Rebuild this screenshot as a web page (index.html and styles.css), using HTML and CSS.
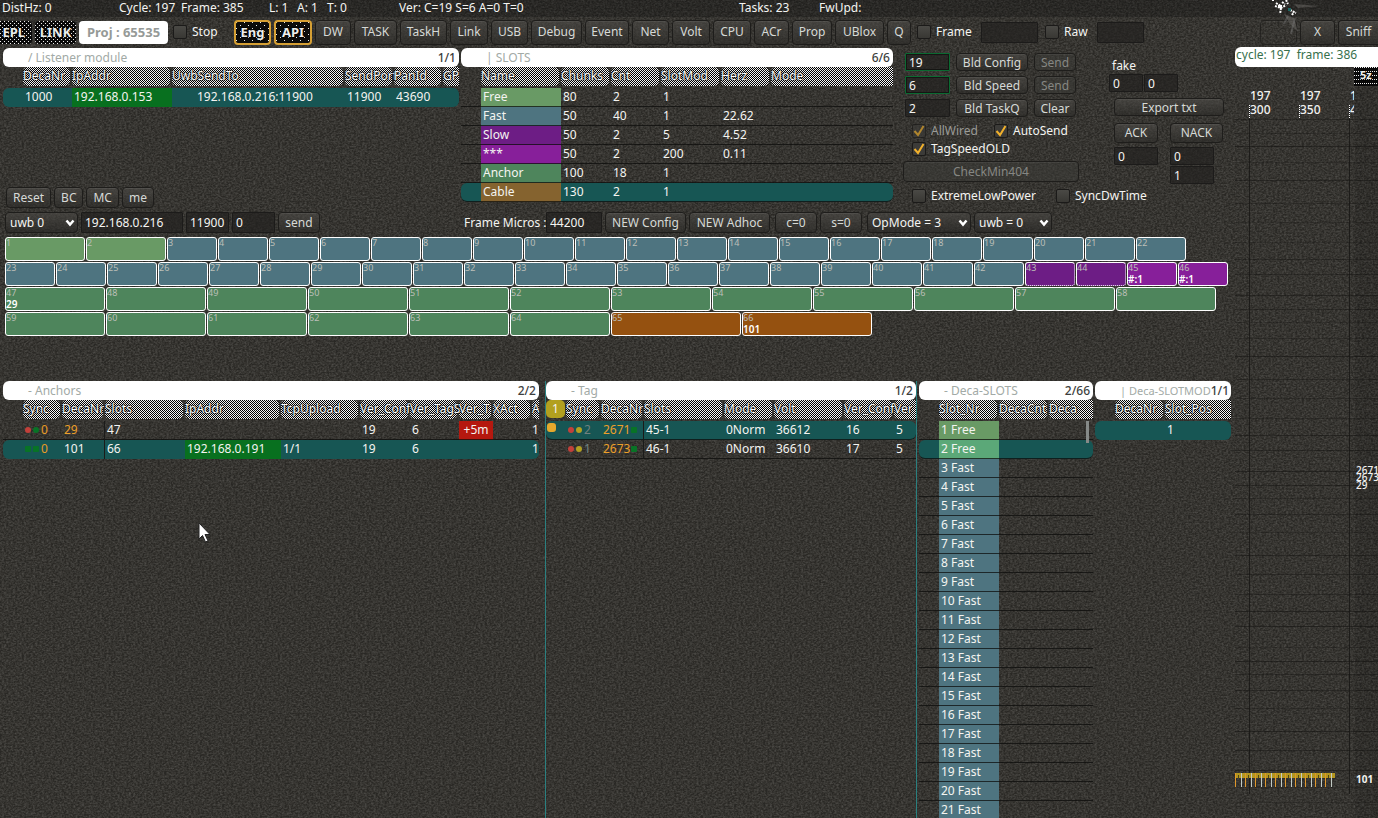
FILE: index.html
```
<!DOCTYPE html>
<html lang="en">
<head>
<meta charset="utf-8">
<title>Listener console</title>
<link rel="stylesheet" href="styles.css">
</head>
<body>
<header class="status">
  <span>DistHz: 0</span><span>Cycle: 197</span><span>Frame: 385</span><span>L: 1</span><span>A: 1</span><span>T: 0</span><span>Ver: C=19 S=6 A=0 T=0</span><span>Tasks: 23</span><span>FwUpd:</span>
  <svg class="emblem" width="56" height="46" viewBox="0 0 56 46" aria-hidden="true">
    <path d="M16 14 L26 18 L30 32 L22 24 Z M26 4 L52 6 L30 8 Z" fill="#6b6a66" opacity=".5"/>
    <path d="M4 0h3M8 3l5 3M7 6l6 2 5-3M13 8l-1 6M14 2l3 2M18 0l2 4M22 10l6 3M24 15l2-3" stroke="#fff" stroke-width="2" stroke-dasharray="2 1" fill="none"/>
    <path d="M10 5h4v3h-4z" fill="#fff"/><path d="M20 8h3v3h-3z" fill="#1e6663"/>
    <path d="M20 16l-4 8M27 18l-4 16" stroke="#777" opacity=".4" stroke-width="2"/>
  </svg>
</header>

<nav class="toolbar">
  <button class="led repl">EPL</button>
  <button class="led">LINK</button>
  <button class="proj">Proj : 65535</button>
  <label class="check"><input type="checkbox">Stop</label>
  <button class="led on">Eng</button>
  <button class="led on">API</button>
  <button class="btn">DW</button>
  <button class="btn">TASK</button>
  <button class="btn">TaskH</button>
  <button class="btn">Link</button>
  <button class="btn">USB</button>
  <button class="btn">Debug</button>
  <button class="btn">Event</button>
  <button class="btn">Net</button>
  <button class="btn">Volt</button>
  <button class="btn">CPU</button>
  <button class="btn">ACr</button>
  <button class="btn">Prop</button>
  <button class="btn">UBlox</button>
  <button class="btn short">Q</button>
  <label class="check"><input type="checkbox">Frame</label>
  <input class="field filter" type="text" aria-label="Frame filter">
  <label class="check"><input type="checkbox">Raw</label>
  <input class="field" type="text" aria-label="Raw filter">
  <span></span>
  <button class="btn ghost" aria-label="Blank"></button>
  <button class="btn">X</button>
  <button class="btn sniff">Sniff</button>
</nav>

<div class="page">
<main>
  <div class="upper">
    <section class="stack">
      <div class="panel">
        <h2 class="title"><span>/ Listener module</span><b>1/1</b></h2>
        <table>
          <colgroup><col style="width:20px"><col style="width:49px"><col style="width:100px"><col style="width:173px"><col style="width:49px"><col style="width:49px"><col style="width:16px"></colgroup>
          <thead><tr><td></td><th><div>DecaNr</div></th><th><div>IpAddr</div></th><th><div>UwbSendTo</div></th><th><div>SendPort</div></th><th><div>PanId</div></th><th><div>GP</div></th></tr></thead>
          <tbody><tr class="sel"><td></td><td>1000</td><td class="ip">192.168.0.153</td><td class="mid">192.168.0.216:11900</td><td>11900</td><td>43690</td><td></td></tr></tbody>
        </table>
      </div>
      <div class="actions"><button class="btn">Reset</button><button class="btn">BC</button><button class="btn">MC</button><button class="btn">me</button></div>
    </section>

    <section class="panel">
      <h2 class="title"><span>| SLOTS</span><b>6/6</b></h2>
      <table class="ruled">
        <colgroup><col style="width:20px"><col style="width:80px"><col style="width:50px"><col style="width:50px"><col style="width:60px"><col style="width:50px"><col style="width:122px"></colgroup>
        <thead><tr><td></td><th><div>Name</div></th><th><div>Chunks</div></th><th><div>Cnt</div></th><th><div>SlotMod</div></th><th><div>Herz</div></th><th><div>Mode</div></th></tr></thead>
        <tbody>
          <tr><td></td><td class="k-free">Free</td><td>80</td><td>2</td><td>1</td><td></td><td></td></tr>
          <tr><td></td><td class="k-fast">Fast</td><td>50</td><td>40</td><td>1</td><td>22.62</td><td></td></tr>
          <tr><td></td><td class="k-slow">Slow</td><td>50</td><td>2</td><td>5</td><td>4.52</td><td></td></tr>
          <tr><td></td><td class="k-star">***</td><td>50</td><td>2</td><td>200</td><td>0.11</td><td></td></tr>
          <tr><td></td><td class="k-anchor">Anchor</td><td>100</td><td>18</td><td>1</td><td></td><td></td></tr>
          <tr class="sel"><td></td><td class="k-cable">Cable</td><td>130</td><td>2</td><td>1</td><td></td><td></td></tr>
        </tbody>
      </table>
    </section>

    <section class="controls">
      <div class="build">
        <div class="grid3">
          <input class="field green" type="text" value="19" aria-label="Config version"><button class="btn">Bld Config</button><button class="btn dim">Send</button>
          <input class="field green" type="text" value="6" aria-label="Speed version"><button class="btn">Bld Speed</button><button class="btn dim">Send</button>
          <input class="field" type="text" value="2" aria-label="Task count"><button class="btn">Bld TaskQ</button><button class="btn">Clear</button>
        </div>
        <div class="ticks">
          <label class="check dim"><input type="checkbox" checked>AllWired</label>
          <label class="check"><input type="checkbox" checked>AutoSend</label>
          <label class="check"><input type="checkbox" checked>TagSpeedOLD</label>
        </div>
        <button class="btn dim wide">CheckMin404</button>
      </div>
      <div class="fake">
        <label for="fake1">fake</label>
        <div class="pair"><input id="fake1" class="field" type="text" value="0"><input class="field" type="text" value="0" aria-label="fake 2"></div>
        <button class="btn export">Export txt</button>
        <div class="acks">
          <button class="btn">ACK</button><button class="btn">NACK</button>
          <input class="field" type="text" value="0" aria-label="ACK count"><div class="nacks"><input class="field" type="text" value="0" aria-label="NACK count"><input class="field" type="text" value="1" aria-label="NACK limit"></div>
        </div>
      </div>
      <div class="power">
        <label class="check"><input type="checkbox">ExtremeLowPower</label>
        <label class="check"><input type="checkbox">SyncDwTime</label>
      </div>
    </section>
  </div>

  <div class="command">
    <div class="sender">
      <select class="w-uwb" aria-label="Module"><option>uwb 0</option></select>
      <input class="field w-addr" type="text" value="192.168.0.216" aria-label="Address">
      <input class="field w-port" type="text" value="11900" aria-label="Port">
      <input class="field w-port" type="text" value="0" aria-label="Command">
      <button class="btn w-small">send</button>
    </div>
    <div class="framing">
      <label for="micros">Frame Micros :</label>
      <input id="micros" class="field w-micros" type="text" value="44200">
      <button class="btn w-new">NEW Config</button>
      <button class="btn w-new">NEW Adhoc</button>
      <button class="btn w-small gap">c=0</button>
      <button class="btn w-small">s=0</button>
      <select class="w-op gap" aria-label="Operation mode"><option>OpMode = 3</option></select>
      <select class="w-uwb2" aria-label="UWB"><option>uwb = 0</option></select>
    </div>
  </div>

  <div class="timeline" id="timeline"></div>

  <div class="lower">
    <section class="panel anchors">
      <h2 class="title"><span>- Anchors</span><b>2/2</b></h2>
      <table>
        <colgroup><col style="width:20px"><col style="width:39px"><col style="width:43px"><col style="width:80px"><col style="width:96px"><col style="width:79px"><col style="width:50px"><col style="width:49px"><col style="width:34px"><col style="width:39px"><col style="width:7px"></colgroup>
        <thead><tr><td></td><th><div>Sync</div></th><th><div>DecaNr</div></th><th><div>Slots</div></th><th><div>IpAddr</div></th><th><div>TcpUpload</div></th><th><div>Ver_Conf</div></th><th><div>Ver_TagS</div></th><th><div>Ver_T</div></th><th><div>XAct</div></th><th><div>A</div></th></tr></thead>
        <tbody>
          <tr class="line"><td></td><td class="sync"><i class="dot red"></i><i class="dot grn"></i><em>0</em></td><td class="amber edge">29</td><td>47</td><td></td><td></td><td>19</td><td>6</td><td class="alarm">+5m</td><td></td><td class="last">1</td></tr>
          <tr class="sel"><td></td><td class="sync"><i class="dot grn sq"></i><i class="dot grn sq"></i><em>0</em></td><td class="edge">101</td><td>66</td><td class="ip">192.168.0.191</td><td>1/1</td><td>19</td><td>6</td><td></td><td></td><td class="last">1</td></tr>
        </tbody>
      </table>
    </section>

    <section class="panel tags">
      <h2 class="title"><span>- Tag</span><b>1/2</b></h2>
      <table class="ruled">
        <colgroup><col style="width:20px"><col style="width:35px"><col style="width:43px"><col style="width:80px"><col style="width:50px"><col style="width:70px"><col style="width:50px"><col style="width:22px"></colgroup>
        <thead><tr><td><span class="badge">1</span></td><th><div>Sync</div></th><th><div>DecaNr</div></th><th><div>Slots</div></th><th><div>Mode</div></th><th><div>Volt</div></th><th><div>Ver_Conf</div></th><th><div>Ver</div></th></tr></thead>
        <tbody>
          <tr class="sel"><td class="mark"><i></i></td><td class="sync"><i class="dot red"></i><i class="dot yel"></i><em class="off">2</em></td><td class="amber edge">2671<i class="dot grn sq"></i></td><td>45-1</td><td>0Norm</td><td>36612</td><td>16</td><td>5</td></tr>
          <tr><td></td><td class="sync"><i class="dot red"></i><i class="dot yel"></i><em class="off">1</em></td><td class="amber edge">2673<i class="dot grn sq"></i></td><td>46-1</td><td>0Norm</td><td>36610</td><td>17</td><td>5</td></tr>
        </tbody>
      </table>
    </section>

    <section class="panel deca">
      <h2 class="title"><span>- Deca-SLOTS</span><b>2/66</b></h2>
      <table class="ruled">
        <colgroup><col style="width:20px"><col style="width:60px"><col style="width:50px"><col style="width:44px"></colgroup>
        <thead><tr><td></td><th><div>Slot_Nr</div></th><th><div>DecaCnt</div></th><th><div>Deca</div></th></tr></thead>
        <tbody id="slotRows"></tbody>
      </table>
      <span class="thumb"></span>
    </section>

    <section class="panel">
      <h2 class="title small"><span>| Deca-SLOTMOD</span><b>1/1</b></h2>
      <table>
        <colgroup><col style="width:20px"><col style="width:50px"><col style="width:66px"></colgroup>
        <thead><tr><td></td><th><div>DecaNr</div></th><th><div>Slot_Pos</div></th></tr></thead>
        <tbody><tr class="sel"><td></td><td></td><td>1</td></tr></tbody>
      </table>
    </section>
  </div>
</main>

<aside class="plot">
  <h2 class="plot-title">cycle: 197&nbsp; frame: 386</h2>
  <span class="scale">5z</span>
  <svg class="canvas" id="plot" aria-label="Frame plot"></svg>
</aside>
</div>

<svg class="pointer" width="14" height="22" viewBox="0 0 14 22" aria-hidden="true"><path d="M1 1v16l3.500-3.500 3 6.500 2.500-1.200-3-6.300h5z" fill="#fff" stroke="#222" stroke-width="1"/></svg>
<script src="app.js"></script>
</body>
</html>
```
FILE: styles.css
```
* { box-sizing: border-box; }
:root {
  --teal: #175654;
  --edge: #1e1d1b;
  --text: #f4f4f1;
  --check: repeating-conic-gradient(#000 0 25%, #f4f4f4 0 50%);
  --speck: conic-gradient(at 1px 1px, transparent 75%, #eee 0);
  --noise: url("data:image/svg+xml,%3Csvg xmlns='http://www.w3.org/2000/svg' width='256' height='256'%3E%3Cfilter id='n' x='0' y='0' width='100%25' height='100%25' color-interpolation-filters='sRGB'%3E%3CfeTurbulence type='fractalNoise' baseFrequency='.45 .6' numOctaves='3' seed='4' stitchTiles='stitch'/%3E%3CfeColorMatrix values='1 0 0 0 -.28 1 0 0 0 -.29 1 0 0 0 -.305 0 0 0 0 .24'/%3E%3C/filter%3E%3Crect width='256' height='256' filter='url(%23n)'/%3E%3C/svg%3E");
}
body {
  margin: 0;
  height: 100vh;
  overflow: hidden;
  display: flex;
  flex-direction: column;
  color: var(--text);
  font: 12px/16px "Noto Sans", "Open Sans", sans-serif;
  background: var(--noise), #363531;
}
button, input, select { font: inherit; color: inherit; margin: 0; }
h2 { margin: 0; font: inherit; }

.status {
  position: relative;
  display: grid;
  grid-template-columns: 117px 62px 88px 28px 30px 72px 340px 80px 1fr;
  height: 17px;
  padding-left: 2px;
  white-space: nowrap;
  background: rgba(15, 15, 14, .32);
}
.emblem { position: absolute; right: 54px; top: 0; z-index: 2; }

.toolbar {
  display: grid;
  grid-template-columns: 32px 41px 91px 58px 37px 38px 36px 43px 47px 38px 37px 51px 44px 37px 38px 38px 35px 40px 49px 27px 61px 61px 49px 47px 1fr 37px 35px 40px;
  gap: 3px;
  align-items: center;
  height: 30px;
}
.btn {
  height: 25px;
  padding: 0 1px;
  border: 1px solid var(--edge);
  border-radius: 4px;
  background: linear-gradient(rgba(80, 78, 74, .6), rgba(44, 43, 40, .6));
  box-shadow: inset 0 1px 0 rgba(255, 255, 255, .06);
  color: #d6d9d6;
  white-space: nowrap;
  overflow: hidden;
}
.btn.dim { color: #868783; background: rgba(60, 59, 56, .5); }
.btn.ghost { background: none; opacity: .7; }
.btn.short { width: 24px; }
.btn.sniff { border-right: 0; border-radius: 4px 0 0 4px; }
.led {
  height: 23px;
  padding: 0;
  border: 0;
  border-radius: 4px;
  overflow: hidden;
  white-space: nowrap;
  font-weight: 700;
  font-size: 13px;
  color: #eceeec;
  text-shadow: 0 0 1px #000, 0 0 2px #000, 0 0 2px #000;
  background: var(--speck) 0 0 / 4px 4px, var(--speck) 2px 2px / 4px 4px, #0a0a0a;
}
.led.repl { display: flex; justify-content: flex-end; align-items: center; padding-right: 7px; border-radius: 0 4px 4px 0; }
.led.on { height: 25px; border: 2px solid #d6a034; background: var(--speck) 0 0 / 8px 6px, var(--speck) 4px 3px / 8px 6px, #0c0c0b; }
.proj { width: 89px; height: 23px; padding: 0; border: 0; border-radius: 4px; background: #fff; color: #969a97; font-weight: 700; font-size: 13px; white-space: nowrap; }

.check { display: flex; align-items: center; gap: 5px; white-space: nowrap; }
.check.dim { color: #9a9b97; }
.check input {
  appearance: none;
  flex: none;
  width: 14px;
  height: 14px;
  border: 1px solid #1b1a19;
  border-radius: 2px;
  background: linear-gradient(#4a4945, #383733);
}
.check input:checked {
  background: url("data:image/svg+xml,%3Csvg xmlns='http://www.w3.org/2000/svg' viewBox='0 0 12 12'%3E%3Cpath d='M1.500 6l3.500 4L10.500 1' fill='none' stroke='%23f0b02c' stroke-width='2'/%3E%3C/svg%3E") center / 12px no-repeat, #3c3b38;
}
.check.dim input { opacity: .65; }
.field {
  min-width: 0;
  width: 100%;
  height: 18px;
  padding: 0 3px;
  border: 1px solid #1c1b1a;
  border-radius: 1px;
  background: rgba(34, 33, 31, .65);
  outline: 0;
}
.field.green { border-color: #0b6a31; box-shadow: inset 0 0 0 1px #151513; }
.toolbar .field { height: 21px; }
.field.filter { width: 57px; }
select {
  appearance: none;
  height: 21px;
  padding: 0 4px;
  border: 1px solid var(--edge);
  border-radius: 4px;
  background: url("data:image/svg+xml,%3Csvg xmlns='http://www.w3.org/2000/svg' viewBox='0 0 10 8'%3E%3Cpath d='M1.500 1.500L5 5.500l3.500-4' fill='none' stroke='%23fff' stroke-width='2.500'/%3E%3C/svg%3E") right 2px center / 10px 8px no-repeat, linear-gradient(rgba(78, 76, 72, .6), rgba(40, 39, 37, .6));
}

.page { flex: 1; min-height: 0; display: grid; grid-template-columns: 1fr 143px; }
main { min-width: 0; display: flex; flex-direction: column; }
.upper { display: grid; grid-template-columns: 456fr 432fr 340fr; gap: 2px; padding: 1px 0 0 3px; height: 161px; }
.upper .controls { margin-left: 8px; }
.stack { display: flex; flex-direction: column; justify-content: space-between; min-width: 0; }
.actions { display: flex; gap: 3px; padding-left: 3px; }
.actions .btn { height: 21px; padding: 0 6px; }

.panel { min-width: 0; position: relative; }
.title {
  display: flex;
  justify-content: space-between;
  align-items: center;
  height: 19px;
  padding: 0 3px 0 25px;
  border-radius: 6px;
  background: #fff;
  white-space: nowrap;
  color: #a2aaa6;
}
.title.small { font-size: 11px; }
.title b { color: #3c3e3d; font-weight: 500; font-size: 12px; }
table { width: 100%; table-layout: fixed; border-collapse: separate; border-spacing: 0; }
th, td { padding: 0; height: 19px; text-align: left; font-weight: 400; white-space: nowrap; line-height: 17px; vertical-align: top; }
thead td, th { height: 21px; }
th div {
  height: 19px;
  margin-right: 2px;
  border-radius: 5px;
  background: var(--check) 0 0 / 2px 2px;
  color: #fff;
  text-shadow: 0 0 1px #000, 0 0 2px #000, 0 0 2px #000;
}
th:last-child div { margin-right: 0; overflow: hidden; border-radius: 5px 0 0 5px; }
tbody td { padding-left: 2px; }
.ruled tbody td, .line td { border-bottom: 1px solid rgba(14, 13, 12, .75); }
.sel td { background: var(--teal); }
.sel td:first-child { border-radius: 6px 0 0 6px; }
.sel td:last-child { border-radius: 0 6px 6px 0; }
.sel td.ip { background: #08701f; }
td.mid { padding-left: 25px; }
.edge { border-right: 1px solid #1b1b1a; }
.amber { color: #eda02a; }
.k-free { background: #699a65 !important; }
.k-fast { background: #4e7480 !important; }
.k-slow { background: #6d1d85 !important; }
.k-star { background: #871f9a !important; }
.k-anchor { background: #4e855c !important; }
.k-cable { background: #85632f !important; }
.k-free2 { background: #5ba878 !important; }
td.alarm { background: #b5180f; text-align: center; padding: 0; }
td.last { padding: 0; overflow: hidden; }
.sync em { color: #e89b25; font-style: normal; margin-left: 1px; }
.sync em.off { color: #71817f; }
.dot { display: inline-block; width: 6px; height: 6px; margin: 0 1px 1px 0; border-radius: 3px; vertical-align: middle; }
.dot + .dot { margin-left: 1px; }
.sq { border-radius: 1px; }
.edge .dot { margin-left: 1px; }
.red { background: #c2403a; }
.grn { background: #087326; }
.yel { background: #b3a021; }

.controls { display: grid; grid-template-columns: 176px 1fr; grid-template-rows: 135px 1fr; column-gap: 30px; }
.build { padding: 5px 0 0; }
.grid3 { display: grid; grid-template-columns: 45px 72px 42px; gap: 5px 6px; padding-left: 2px; }
.grid3 .btn, .export { height: 18px; line-height: 15px; }
.ticks { display: grid; grid-template-columns: 82px 1fr; gap: 2px 0; padding: 6px 0 4px 9px; }
.wide { width: 100%; height: 21px; }
.fake { padding: 10px 0 0; }
.fake > label { padding-left: 3px; }
.pair { display: grid; grid-template-columns: 34px 34px; gap: 1px; }
.export { width: 110px; margin: 6px 0 7px 5px; display: block; }
.acks { display: grid; grid-template-columns: 44px 53px; gap: 4px 12px; padding-left: 5px; }
.acks .btn { height: 20px; }
.nacks { display: grid; gap: 1px; width: 44px; }
.power { grid-column: 1 / -1; display: grid; grid-template-columns: 144px 1fr; padding-left: 9px; align-content: start; padding-top: 5px; }

.command { display: grid; grid-template-columns: 464px 1fr; padding-top: 3px; height: 29px; }
.sender, .framing { display: flex; align-items: center; gap: 3px; height: 23px; white-space: nowrap; }
.sender { padding-left: 5px; }
.command .btn { height: 21px; }
.command .field { height: 21px; flex: none; }
.framing label { width: 79px; }
.framing .gap { margin-left: 2px; }
.w-uwb { width: 73px; }
.w-addr.field { width: 102px; }
.w-port.field { width: 43px; }
.w-small { width: 42px; }
.w-micros.field { width: 56px; }
.w-new { width: 81px; }
.w-op { width: 104px; }
.w-uwb2 { width: 78px; }

.timeline { display: grid; gap: 1px; padding-left: 5px; }
.lane { display: flex; gap: 1px; }
.slot {
  display: flex;
  flex-direction: column;
  height: 24px;
  min-width: 0;
  border: 1px solid #fff;
  border-radius: 3px;
  font-size: 9px;
  line-height: 10px;
  color: #bcbfb8;
}
.slot b { font-size: 10px; line-height: 12px; color: #fff; font-weight: 600; }
.slot.k-cable { background: #955110 !important; }
.slot.k-slow { border-style: solid dotted dotted solid; }

.lower { flex: 1; min-height: 0; display: grid; grid-template-columns: 540fr 372fr 174fr 136fr; gap: 2px; padding: 45px 4px 0 3px; }
.anchors { padding-right: 4px; }
.tags { border-left: 1px solid #2a8080; border-right: 1px solid #2a8080; }
.badge { display: block; width: 19px; height: 18px; border-radius: 5px; background: #b2a01f; text-align: center; }
.mark i { display: block; width: 9px; height: 9px; border-radius: 3px; background: #e5a92d; margin: 2px 0 0 -1px; }
.thumb { position: absolute; right: 4px; top: 40px; width: 3px; height: 22px; background: #868a88; }

.plot { position: relative; display: flex; flex-direction: column; min-width: 0; overflow: hidden; }
.plot-title { height: 20px; padding-left: 1px; border-radius: 6px 0 0 6px; background: #fff; color: #38704c; white-space: nowrap; }
.scale { position: absolute; right: 0; top: 20px; width: 24px; height: 19px; padding-left: 6px; background: var(--speck) 0 0 / 2px 4px, #0a0a0a; font-weight: 700; font-size: 11px; text-shadow: 0 0 2px #000, 0 0 2px #000; }
.canvas { width: 100%; flex: 1; min-height: 0; font-size: 12px; font-weight: 500; }
.canvas .tiny { font-size: 10px; }
.canvas .strong { font-size: 10px; font-weight: 700; }
.pointer { position: absolute; left: 198px; top: 522px; }
```
FILE: app.js
```
const slots = [];
const add = (count, kind, size) => { for (let i = 0; i < count; i++) slots.push({ kind, size }); };
add(2, 'free', 80);
add(40, 'fast', 50);
add(2, 'slow', 50);
add(2, 'star', 50);
add(18, 'anchor', 100);
add(2, 'cable', 130);
const owners = { 45: '#:1', 46: '#:1', 47: '29', 66: '101' };

const timeline = document.getElementById('timeline');
[[1, 22], [23, 46], [47, 58], [59, 66]].forEach(([from, to]) => {
  const lane = document.createElement('div');
  lane.className = 'lane';
  for (let n = from; n <= to; n++) {
    const s = slots[n - 1];
    const el = document.createElement('div');
    el.className = 'slot k-' + s.kind;
    el.style.flex = '0 1 ' + s.size + 'px';
    el.textContent = n;
    if (owners[n]) {
      const b = document.createElement('b');
      b.textContent = owners[n];
      el.append(b);
    }
    lane.append(el);
  }
  timeline.append(lane);
});

document.getElementById('slotRows').innerHTML = Array.from({ length: 21 }, (_, i) => {
  const n = i + 1;
  const kind = n === 1 ? 'free' : n === 2 ? 'free2' : 'fast';
  const name = n < 3 ? 'Free' : 'Fast';
  return `<tr${n === 2 ? ' class="sel"' : ''}><td></td><td class="k-${kind}">${n} ${name}</td><td></td><td></td></tr>`;
}).join('');

let art = '';
for (let y = 52; y < 750; y += 13 + (y * 7) % 11) {
  art += `<path d="M0 ${y}.5H143" stroke="#151412" opacity="${0.25 + (y % 5) * 0.08}"/>`;
}
art += '<path d="M14.500 38V727M114.500 38V727" stroke="#181715" opacity=".8"/>';
art += '<rect x="120" y="20" width="23" height="751" fill="#000" opacity=".1"/>';
art += '<path d="M14.500 38v14M64.500 38v14M114.500 38v14" stroke="#fff" stroke-dasharray="1 1"/>';
const label = (x, y, t, c = '') => { art += `<text x="${x}" y="${y}" fill="#f2f2f0" class="${c}">${t}</text>`; };
label(15, 33, '197'); label(15, 47, '300');
label(65, 33, '197'); label(65, 47, '350');
art += '<svg width="119" height="60">';
label(115, 33, '197'); label(115, 47, '400');
art += '</svg>';
label(121, 407, '2671', 'tiny'); label(121, 414, '2673', 'tiny');
label(121, 422, '29', 'tiny'); label(121, 716, '101', 'strong');
art += '<rect x="0" y="706" width="100" height="5" fill="#b3961f"/>';
for (let i = 0; i < 10; i++) {
  const x = i * 10;
  art += `<path d="M${x + 0.5} 706v14" stroke="#e0972a"/><path d="M${x + 6.5} 706v14" stroke="#c3cbc5"/><path d="M${x + 3.5} 708v3" stroke="#4a4218"/>`;
}
document.getElementById('plot').innerHTML = art;
```
